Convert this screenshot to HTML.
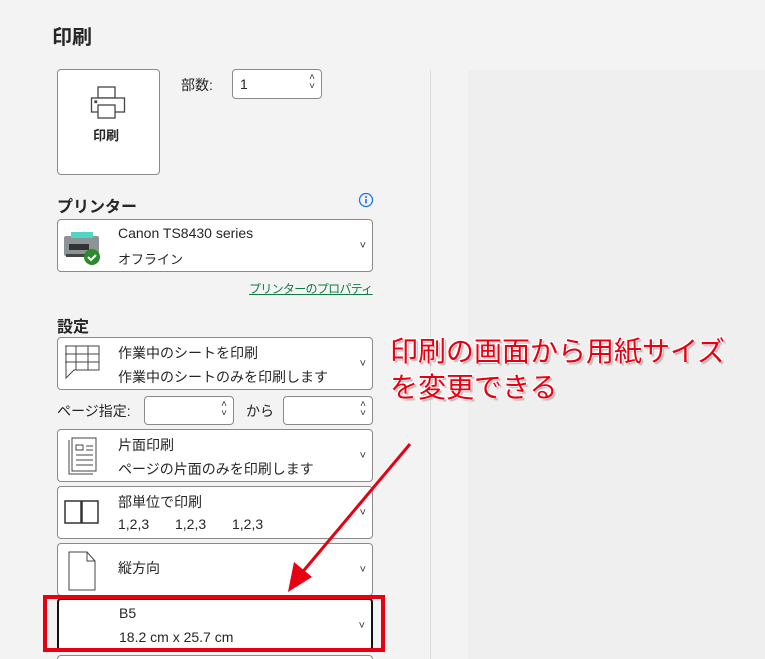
<!DOCTYPE html>
<html style="width:765px;height:659px;overflow:hidden"><head><meta charset="utf-8"><style>
*{margin:0;padding:0;box-sizing:border-box}
body{width:765px;height:659px;overflow:hidden;background:#f3f3f3;font-family:"Liberation Sans","Noto Sans CJK JP",sans-serif;color:#262626;position:relative}
.a{position:absolute}
.box{position:absolute;background:#fff;border:1px solid #8a8a8a;border-radius:4px}
.dd{position:absolute;left:57px;width:316px;height:53px;background:#fff;border:1px solid #8a8a8a;border-radius:4px}
.dd .t1{position:absolute;left:60px;top:5px;font-size:14px}
.dd .t2{position:absolute;left:60px;top:29px;font-size:14px}
.chev{position:absolute;right:6px;top:20px;font-size:11px;color:#333}
.spin{position:absolute;right:6px;font-size:10px;line-height:9px;color:#333;top:3px}
</style></head><body>
<div class="a" style="left:468px;top:70px;width:297px;height:589px;background:#efefef"></div>
<div class="a" style="left:430px;top:70px;width:1px;height:589px;background:#dcdcdc"></div>
<div class="a" style="left:52px;top:21px;font-size:20px;font-weight:bold">印刷</div>
<div class="box" style="left:57px;top:69px;width:103px;height:106px">
<svg class="a" style="left:32px;top:14px" width="36" height="36" viewBox="0 0 36 36" fill="#fff" stroke="#444" stroke-width="1.3"><rect x="8" y="3" width="17" height="11"/><rect x="1.5" y="14" width="33" height="14"/><rect x="8" y="21" width="17" height="13"/><rect x="5" y="17" width="1.5" height="1.5" fill="#444"/></svg>
<div class="a" style="left:35px;top:55px;font-size:13px;font-weight:bold">印刷</div></div>
<div class="a" style="left:181px;top:75px;font-size:14px">部数:</div>
<div class="box" style="left:232px;top:69px;width:90px;height:30px"><div class="a" style="left:7px;top:6px;font-size:14px">1</div><div class="spin">˄<br>˅</div></div>
<div class="a" style="left:57px;top:193px;font-size:16px;font-weight:bold">プリンター</div>
<svg class="a" style="left:358px;top:192px" width="16" height="16"><circle cx="8" cy="8" r="6.5" fill="none" stroke="#1a73e8" stroke-width="1.3"/><rect x="7.2" y="7" width="1.6" height="4.5" fill="#1a73e8"/><circle cx="8" cy="5" r="1" fill="#1a73e8"/></svg>
<div class="dd" style="top:219px"><svg class="a" style="left:5px;top:10px" width="40" height="36"><rect x="1" y="6" width="35" height="20" rx="2" fill="#8c9497"/><rect x="8" y="2" width="22" height="6" fill="#4fd6c6"/><rect x="6" y="14" width="20" height="6" fill="#333"/><rect x="3" y="24" width="26" height="3" fill="#444"/><circle cx="29" cy="27" r="8" fill="#2b8a2b"/><path d="M25 27l3 3 5-5" stroke="#fff" stroke-width="2" fill="none"/></svg>
<div class="t1">Canon TS8430 series</div><div class="t2" style="font-size:13px">オフライン</div><div class="chev">˅</div></div>
<div class="a" style="left:249px;top:280px;font-size:12px;letter-spacing:-0.7px;color:#107c41;text-decoration:underline">プリンターのプロパティ</div>
<div class="a" style="left:57px;top:313px;font-size:16px;font-weight:bold">設定</div>
<div class="dd" style="top:337px"><svg class="a" style="left:6px;top:7px" width="40" height="36" fill="none" stroke="#444"><path d="M1 1h34v24H10l-8 8V1zM1 9h34M1 17h34M12 1v24M24 1v24"/></svg><div class="t1">作業中のシートを印刷</div><div class="t2">作業中のシートのみを印刷します</div><div class="chev">˅</div></div>
<div class="a" style="left:57px;top:401px;font-size:14px">ページ指定:</div>
<div class="box" style="left:144px;top:396px;width:90px;height:29px"><div class="spin">˄<br>˅</div></div>
<div class="a" style="left:246px;top:401px;font-size:14px">から</div>
<div class="box" style="left:283px;top:396px;width:90px;height:29px"><div class="spin">˄<br>˅</div></div>
<div class="dd" style="top:429px"><svg class="a" style="left:10px;top:7px" width="30" height="38" fill="none" stroke="#444"><path d="M1 3v34h24M4 1h24v33H4zM8 8h7v5H8zM18 9h7M18 13h7M8 18h17M8 23h17M8 28h17"/></svg><div class="t1">片面印刷</div><div class="t2">ページの片面のみを印刷します</div><div class="chev">˅</div></div>
<div class="dd" style="top:486px"><svg class="a" style="left:6px;top:13px" width="36" height="26" fill="none" stroke="#333" stroke-width="1.5"><rect x="1" y="1" width="33" height="22"/><path d="M17.5 1v22" stroke-width="2.5"/></svg><div class="t1">部単位で印刷</div><div class="t2">1,2,3</div><div class="t2" style="left:117px">1,2,3</div><div class="t2" style="left:174px">1,2,3</div><div class="chev">˅</div></div>
<div class="dd" style="top:543px"><svg class="a" style="left:10px;top:7px" width="30" height="40" fill="none" stroke="#444"><path d="M1 1h18l8 9v29H1zM19 1v9h8"/></svg><div class="t1" style="top:14px">縦方向</div><div class="chev">˅</div></div>
<div class="dd" style="top:598px;border:2px solid #111"><div class="t1">B5</div><div class="t2">18.2 cm x 25.7 cm</div><div class="chev">˅</div></div>
<div class="dd" style="top:655px;height:4px;border-bottom:none;border-radius:4px 4px 0 0"></div>
<div class="a" style="left:43px;top:595px;width:342px;height:57px;border:4px solid #e60012"></div>
<svg class="a" style="left:280px;top:440px" width="140" height="160"><line x1="130" y1="4" x2="20" y2="135" stroke="#e60012" stroke-width="3"/><path d="M8 152l6-30 18 15z" fill="#e60012"/></svg>
<div class="a" style="left:390px;top:334px;font-size:28px;line-height:36px;color:#e60012;text-shadow:-1px -1px 0 #fff,1px -1px 0 #fff,-1px 1px 0 #fff,2px 2px 1px #bbb">印刷の画面から用紙サイズ<br>を変更できる</div>
</body></html>
